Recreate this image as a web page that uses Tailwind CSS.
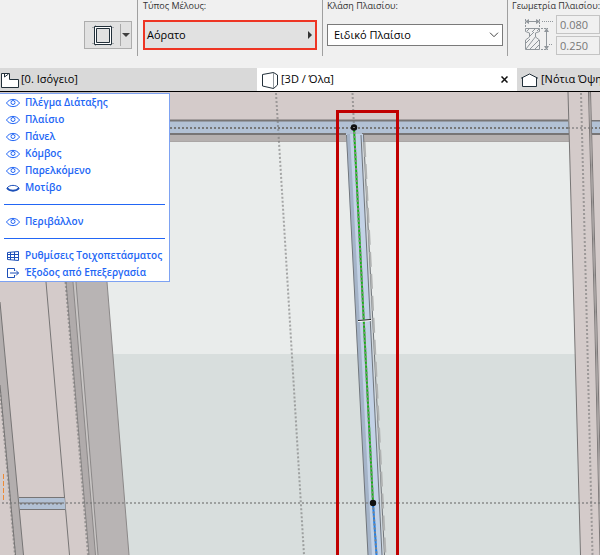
<!DOCTYPE html>
<html lang="el">
<head>
    <meta charset="UTF-8">
    <meta name="viewport" content="width=device-width, initial-scale=1.0">
    <title>3D / Όλα</title>
    <script src="https://cdn.jsdelivr.net/npm/@tailwindcss/browser@4"></script>
</head>
<body class="flex h-screen flex-col overflow-hidden bg-[#f0f0f0] font-['Open_Sans','Noto_Sans',sans-serif] text-[11px] text-black">
    <svg class="hidden">
        <symbol id="eye" viewBox="0 0 14 10">
            <path d="M.5 5C3.500 .2 10.500 .2 13.500 5C10.500 9.800 3.500 9.800 .5 5Z" fill="none" stroke="currentColor"/>
            <circle cx="7" cy="4.500" r="2" fill="none" stroke="currentColor"/>
        </symbol>
    </svg>

    <!-- info box -->
    <header class="flex h-[68px] shrink-0 overflow-hidden">
        <div class="flex w-[137px] shrink-0 items-start justify-end pt-[21px] pr-[5px]">
            <button aria-label="Πλαίσιο" class="flex h-7 w-12 items-center border border-[#adadad] bg-[#e1e1e1]">
                <svg class="h-[26px] w-[35px] shrink-0" viewBox="0 0 35 26" fill="none">
                    <path d="M7 5.500H29M7 21.500H29M10.500 3V24M25.500 3V24" stroke="#a5a9ac"/>
                    <path d="M9.500 4.500H26.500V22.500H9.500Z" fill="#fff" stroke="#22303a"/>
                    <path d="M11.500 6.500H24.500V20.500H11.500Z" fill="#e1e1e1" stroke="#22303a"/>
                </svg>
                <svg class="h-[22px] w-[11px] shrink-0 border-l border-[#a8a8a8]" viewBox="0 0 10 22"><path d="M1 9H9L5 13Z" fill="#404040"/></svg>
            </button>
        </div>
        <div class="h-14 w-[185px] shrink-0 border-l border-[#a0a0a0] pl-[5px]">
            <label for="member" class="block h-[20px] text-[9px] leading-3 text-[#333]">Τύπος Μέλους:</label>
            <button id="member" class="flex h-[30px] w-[174px] items-center justify-between border-2 border-[#ee3524] bg-[#e1e1e1] pr-[3px] pl-[2px]">
                Αόρατο
                <svg class="h-2 w-1" viewBox="0 0 4 8"><path d="M0 0L4 4L0 8Z" fill="#333"/></svg>
            </button>
        </div>
        <div class="h-14 w-[185px] shrink-0 border-l border-[#a0a0a0] pl-1">
            <label for="frameclass" class="block h-[24px] text-[9px] leading-3 text-[#333]">Κλάση Πλαισίου:</label>
            <div class="relative h-[22px] w-[176px]">
                <select id="frameclass" class="block size-full appearance-none border border-[#7a7a7a] bg-white pl-1.5">
                    <option>Ειδικό Πλαίσιο</option>
                </select>
                <svg class="pointer-events-none absolute top-2 right-1 h-[6px] w-[10px]" viewBox="0 0 10 6"><path d="M1 .7L5 4.700L9 .7" fill="none" stroke="#444"/></svg>
            </div>
        </div>
        <div class="h-14 min-w-[93px] grow border-l border-[#a0a0a0] pl-1">
            <p class="h-[15px] text-[9px] leading-3 whitespace-nowrap text-[#333]">Γεωμετρία Πλαισίου:</p>
            <div class="flex">
                <svg class="h-10 w-11 shrink-0" viewBox="512 15 44 40" fill="none" stroke="#90969b">
                    <path d="M525.500 28.500H539.500V31.500L535.500 33V37L539.500 40V49.500H525.500V40L529.500 37V33L525.500 31.500Z"/>
                    <path d="M526 43L530 39M526 49L536 36M530 49L539 40M535 49L539 45M530 36L534 32M527 31L529 29M532 32L535 29M537 31L539 29"/>
                    <path d="M526 21.500H539M546.500 29V49"/>
                    <path d="M525 21.500L529 19V24ZM540 21.500L536 19V24ZM546.500 28L544 32H549ZM546.500 50L544 46H549Z" fill="#90969b" stroke="none"/>
                    <path d="M525.500 19V28M539.500 19V28M541 28.500H548M541 49.500H548" stroke-dasharray="2 1"/>
                    <path d="M542 21.500H553M549 44.500H553" stroke-dasharray="1 1"/>
                </svg>
                <div class="flex min-w-0 grow flex-col gap-0.5">
                    <input aria-label="Πλάτος" value="0.080" disabled class="h-[19px] w-full border border-[#c4c4c4] bg-[#f0f0f0] px-[3px] text-[#777]">
                    <input aria-label="Ύψος" value="0.250" disabled class="h-[19px] w-full border border-[#c4c4c4] bg-[#f0f0f0] px-[3px] text-[#777]">
                </div>
            </div>
        </div>
    </header>

    <!-- view tabs -->
    <nav class="flex h-6 shrink-0 overflow-hidden border-b border-black bg-[#d9d9d9] whitespace-nowrap">
        <button class="flex w-[257px] shrink-0 items-center gap-[2px]">
            <svg class="h-[18px] w-[19px]" viewBox="0 0 19 18"><path d="M1.500 2.500H9.500V8.500H18.500V16.500H1.500Z" fill="#fff" stroke="#22303a"/><path d="M4.500 2V6L8.500 3" fill="none" stroke="#22303a"/></svg>
            [0. Ισόγειο]
        </button>
        <div class="flex w-[260px] shrink-0 items-center bg-white">
            <button class="flex grow items-center gap-[2px] pl-1">
                <svg class="h-5 w-[18px]" viewBox="0 0 18 20" fill="#fff" stroke="#22303a"><path d="M1.500 4.500L12.500 2.500V18.500L1.500 16Z"/><path d="M12.500 2.500L16.500 5V15L12.500 18.500"/></svg>
                [3D / Όλα]
            </button>
            <button aria-label="Κλείσιμο" class="mr-[9px]"><svg class="size-[7px]" viewBox="0 0 7 7"><path d="M.5 .5L6.500 6.500M6.500 .5L.5 6.500" stroke="#111" stroke-width="1.500"/></svg></button>
        </div>
        <button class="flex shrink-0 items-center gap-[2px] pl-[3px]">
            <svg class="h-4 w-[19px]" viewBox="0 0 19 16"><path d="M1.500 6L9.500 2L17.500 6H16.500V14.500H2.500V6Z" fill="#fff" stroke="#22303a"/></svg>
            [Νότια Όψη
        </button>
    </nav>

    <main class="relative min-h-0 grow">
        <!-- curtain wall model -->
        <svg class="block size-full" viewBox="0 92 600 463" preserveAspectRatio="xMinYMin slice" fill="none" stroke="#777575">
            <g stroke="none">
                <path d="M0 92H600V555H0Z" fill="#e9eceb"/>
                <path d="M0 354H600V555H0Z" fill="#d8dedd"/>
                <!-- top beam -->
                <path d="M0 92H600V121H0Z" fill="#d4cbca"/>
                <path d="M0 121H600V134H0Z" fill="#b2c1d4"/>
                <path d="M0 135H600V142H0Z" fill="#b5b0af"/>
                <!-- left post -->
                <path d="M0 92H92L107 282L129 555H0Z" fill="#b8b4b4"/>
                <path d="M0 92H50L66 282L89 555H0Z" fill="#d4cbca"/>
                <path d="M66 282H73L95.500 555H89Z" fill="#b0abab"/>
                <path d="M73 282H76L98 555H95.500Z" fill="#c8c5c4"/>
                <path d="M0 302L23.500 555H15.500L0 385Z" fill="#b3aeae"/>
            </g>
            <path d="M107 282L129 555M73 282L95.500 555M76 282L98 555M66 282L89 555" stroke="#8b8888"/>
            <path d="M46 282L69.500 555M0 302L23.500 555M0 385L15.500 555"/>
            <path d="M19 498H64.500L65.500 509.500H20Z" fill="#b2c1d4" stroke="none"/>
            <path d="M19 497.500H65M20 509.500H65"/>
            <path d="M3.500 474V500" stroke="#ee8a35" stroke-dasharray="5 2"/>
            <path d="M170 120.500H568M591 120.500H600M170 134H346M362 134H569M592 134H600" stroke-width="2"/>
            <path d="M170 141.500H346M362 141.500H569" stroke="#aaa6a5"/>

            <!-- slanted frame -->
            <path d="M346 134H363L384 555H368Z" fill="#c3d2e6" stroke="none"/>
            <path d="M347 134H350L372 555H368Z" fill="#a5b4c8" stroke="none"/>
            <path d="M363 142L384 555" stroke="#d4d8d9" stroke-width="2"/>
            <path d="M346.500 135L368 555M361 135L382 555M363.500 135L384.500 555" stroke="#70757a"/>
            <path d="M364.500 142L385.500 555" stroke="#b0b2b2" stroke-width="2" stroke-dasharray="15 7"/>

            <!-- right post -->
            <path d="M568 92H600V120H591V135H600V555H580.500L574.500 330Z" fill="#d4cbca" stroke="none"/>
            <path d="M568 92L574.500 330L580.500 555"/>
            <path d="M588.500 92L595 330L600 555M590.500 92L597 330L601 500" stroke="#7b7777"/>
            <path d="M589.500 92L596 330L600 520" stroke="#a29e9d"/>

            <!-- grid lines -->
            <g stroke="#77777799" stroke-width="2" stroke-dasharray="2 2">
                <path d="M170 128H568M591 128H600" stroke="#777"/>
                <path d="M20 503.500H64" stroke="#777"/>
                <path d="M568 128H591M2 503H600"/>
                <path d="M276 93L288 290L304 555"/>
                <path d="M352.500 93L354 127"/>
                <path d="M581 93L587 330L592.500 555"/>
                <path d="M65.500 282L88 555M0 391L15 555"/>
            </g>
            <path d="M354 128L373 503" stroke="#12b512" stroke-width="2"/>
            <path d="M373 503L376.500 555" stroke="#1a80f0" stroke-width="2"/>
            <path d="M354 128L373 503L376.500 555" stroke="#858585" stroke-width="2" stroke-dasharray="2 2"/>
            <path d="M358 321L371 320" stroke="#fff" stroke-width="2"/>
            <path d="M358 320.500L371 319.500" stroke="#222"/>
            <g stroke="none" fill="#111"><circle cx="354" cy="127.500" r="3.200"/><circle cx="373" cy="503" r="3.200"/></g>
            <path d="M353 127.500H355" stroke="#777"/>
            <path d="M337.500 560V111.500H397.500V560" stroke="#c00000" stroke-width="3"/>
        </svg>

        <!-- palette -->
        <ul class="absolute top-px left-0 w-[170px] border border-l-0 border-[#7da2f2] bg-white text-[10px] font-semibold whitespace-nowrap text-[#2266f5] [&_button]:flex [&_button]:h-[17px] [&_button]:w-full [&_button]:items-center [&_button]:gap-[5px] [&_button]:pl-[6px] [&_svg]:h-[10px] [&_svg]:w-[14px] [&_svg]:shrink-0">
            <li><button><svg><use href="#eye"/></svg>Πλέγμα Διάταξης</button></li>
            <li><button><svg><use href="#eye"/></svg>Πλαίσιο</button></li>
            <li><button><svg><use href="#eye"/></svg>Πάνελ</button></li>
            <li><button><svg><use href="#eye"/></svg>Κόμβος</button></li>
            <li><button><svg><use href="#eye"/></svg>Παρελκόμενο</button></li>
            <li><button><svg viewBox="0 0 14 10" fill="none" stroke="#1c4fb8"><path d="M1 5C3.500 1.500 10.500 1.500 13 5"/><path d="M1 5C3.500 8.500 10.500 8.500 13 5" stroke-width="2"/></svg>Μοτίβο</button></li>
            <li class="flex h-[17px] items-center px-1"><hr class="grow border-[#2266f5]"></li>
            <li><button><svg><use href="#eye"/></svg>Περιβάλλον</button></li>
            <li class="flex h-[17px] items-center px-1"><hr class="grow border-[#2266f5]"></li>
            <li><button><svg viewBox="0 0 14 10" fill="none" stroke="#1c4fb8"><path d="M1.500 1.500L12.500 .5V9.500L1.500 8.500ZM4.500 1V9M8.500 1V9M1 3.500H13M1 6.500H13"/></svg>Ρυθμίσεις Τοιχοπετάσματος</button></li>
            <li><button><svg viewBox="0 0 14 10" fill="none" stroke="#1c4fb8"><path d="M8.500 3V.5H1.500V9.500H8.500V7M4 5H12.500M10 2.500L12.500 5L10 7.500"/></svg>Έξοδος από Επεξεργασία</button></li>
        </ul>
    </main>
</body>
</html>
